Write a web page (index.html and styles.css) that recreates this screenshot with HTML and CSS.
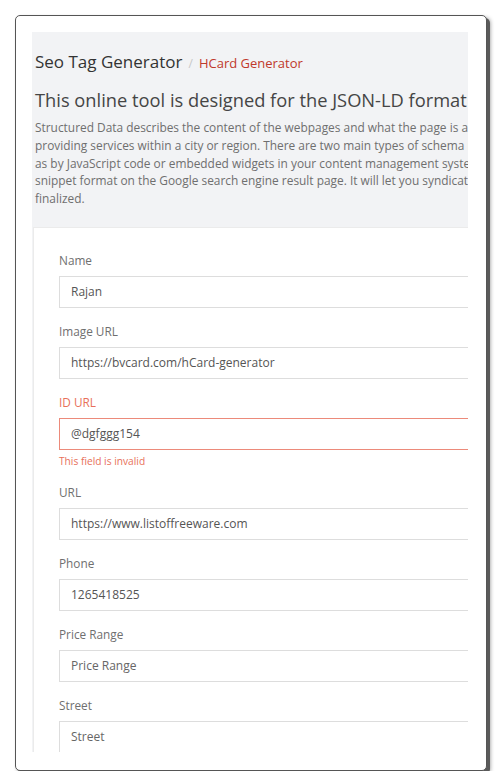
FILE: index.html
```html
<!DOCTYPE html>
<html lang="en">
<head>
  <meta charset="UTF-8"/>
  <meta name="viewport" content="width=device-width, initial-scale=1.0"/>
  <title>HCard Generator</title>
  <link rel="stylesheet" href="styles.css">
</head>
<body>
  <div class="frame">
    <div class="viewport">
      <div class="page">
        <div class="intro">
          <div class="breadcrumb">
            <span class="crumb-root">Seo Tag Generator</span>
            <span class="crumb-sep">/</span>
            <span class="crumb-current">HCard Generator</span>
          </div>
          <h1>This online tool is designed for the JSON-LD format of hCard schema markup</h1>
          <p class="lead">
            Structured Data describes the content of the webpages and what the page is about, for example a business<br>
            providing services within a city or region. There are two main types of schema markup which can be added,<br>
            as by JavaScript code or embedded widgets in your content management system. Your data will appear in rich<br>
            snippet format on the Google search engine result page. It will let you syndicate the data once the code is<br>
            finalized.
          </p>
        </div>

        <form class="card">
          <div class="field">
            <label>Name</label>
            <input type="text" value="Rajan">
          </div>
          <div class="field">
            <label>Image URL</label>
            <input type="text" value="https://bvcard.com/hCard-generator">
          </div>
          <div class="field invalid">
            <label>ID URL</label>
            <input type="text" value="@dgfggg154">
            <div class="error">This field is invalid</div>
          </div>
          <div class="field">
            <label>URL</label>
            <input type="text" value="https://www.listoffreeware.com">
          </div>
          <div class="field">
            <label>Phone</label>
            <input type="text" value="1265418525">
          </div>
          <div class="field">
            <label>Price Range</label>
            <input type="text" placeholder="Price Range">
          </div>
          <div class="field">
            <label>Street</label>
            <input type="text" placeholder="Street">
          </div>
          <div class="field">
            <label>City</label>
            <input type="text" placeholder="City">
          </div>
        </form>
      </div>
    </div>
  </div>
</body>
</html>
```
FILE: styles.css
```css
:root {
  --page-bg: #f2f3f5;
  --frame-border: #555555;
  --text-dark: #333333;
  --text-muted: #6f6f6f;
  --input-border: #dddddd;
  --danger: #e8705a;
  --crumb-red: #c0392b;
}

*, *::before, *::after { box-sizing: border-box; }

body {
  margin: 0;
  padding: 15px 0 0 15px;
  background: #ffffff;
  font-family: 'Open Sans', sans-serif;
  color: var(--text-dark);
}

.frame {
  width: 472px;
  height: 756px;
  padding: 16px;
  background: #ffffff;
  border: 1.5px solid var(--frame-border);
  border-radius: 5px;
  box-shadow: 3px 3px 0 #5a5a5a, 3px 3px 4px rgba(0,0,0,0.45);
}

.viewport {
  width: 436px;
  height: 720px;
  overflow: hidden;
  background: var(--page-bg);
}

.page {
  width: 620px;
}

.intro {
  padding: 18px 0 19px 3px;
}

.breadcrumb {
  display: flex;
  align-items: baseline;
  gap: 6px;
  height: 24px;
  line-height: 24px;
  white-space: nowrap;
}

.crumb-root {
  font-size: 17px;
  color: var(--text-dark);
}

.crumb-sep {
  font-size: 12px;
  color: #c8c8c8;
}

.crumb-current {
  font-size: 13px;
  color: var(--crumb-red);
}

h1 {
  margin: 13px 0 6px;
  font-size: 18.3px;
  font-weight: 400;
  line-height: 26px;
  color: #454545;
  white-space: nowrap;
}

.lead {
  margin: 0;
  font-size: 11.9px;
  line-height: 17.75px;
  color: var(--text-muted);
  white-space: nowrap;
}

.card {
  margin-left: 1px;
  padding: 24px 25px 25px 25px;
  background: #ffffff;
  border: 1px solid #ebebeb;
}

.field {
  display: flex;
  flex-direction: column;
  margin-bottom: 15px;
}

.field label {
  font-size: 11.8px;
  line-height: 17px;
  color: var(--text-muted);
  margin-bottom: 7px;
}

.field input {
  height: 32px;
  padding: 0 11px;
  font: 12px 'Open Sans', sans-serif;
  color: #555555;
  background: #ffffff;
  border: 1px solid var(--input-border);
  border-radius: 0;
  outline: none;
}

.field input::placeholder {
  color: #666666;
}

.field.invalid label { color: var(--danger); }
.field.invalid input { border-color: #ec8a7a; }

.error {
  margin-top: 4px;
  font-size: 10.2px;
  line-height: 15px;
  color: var(--danger);
}
```
